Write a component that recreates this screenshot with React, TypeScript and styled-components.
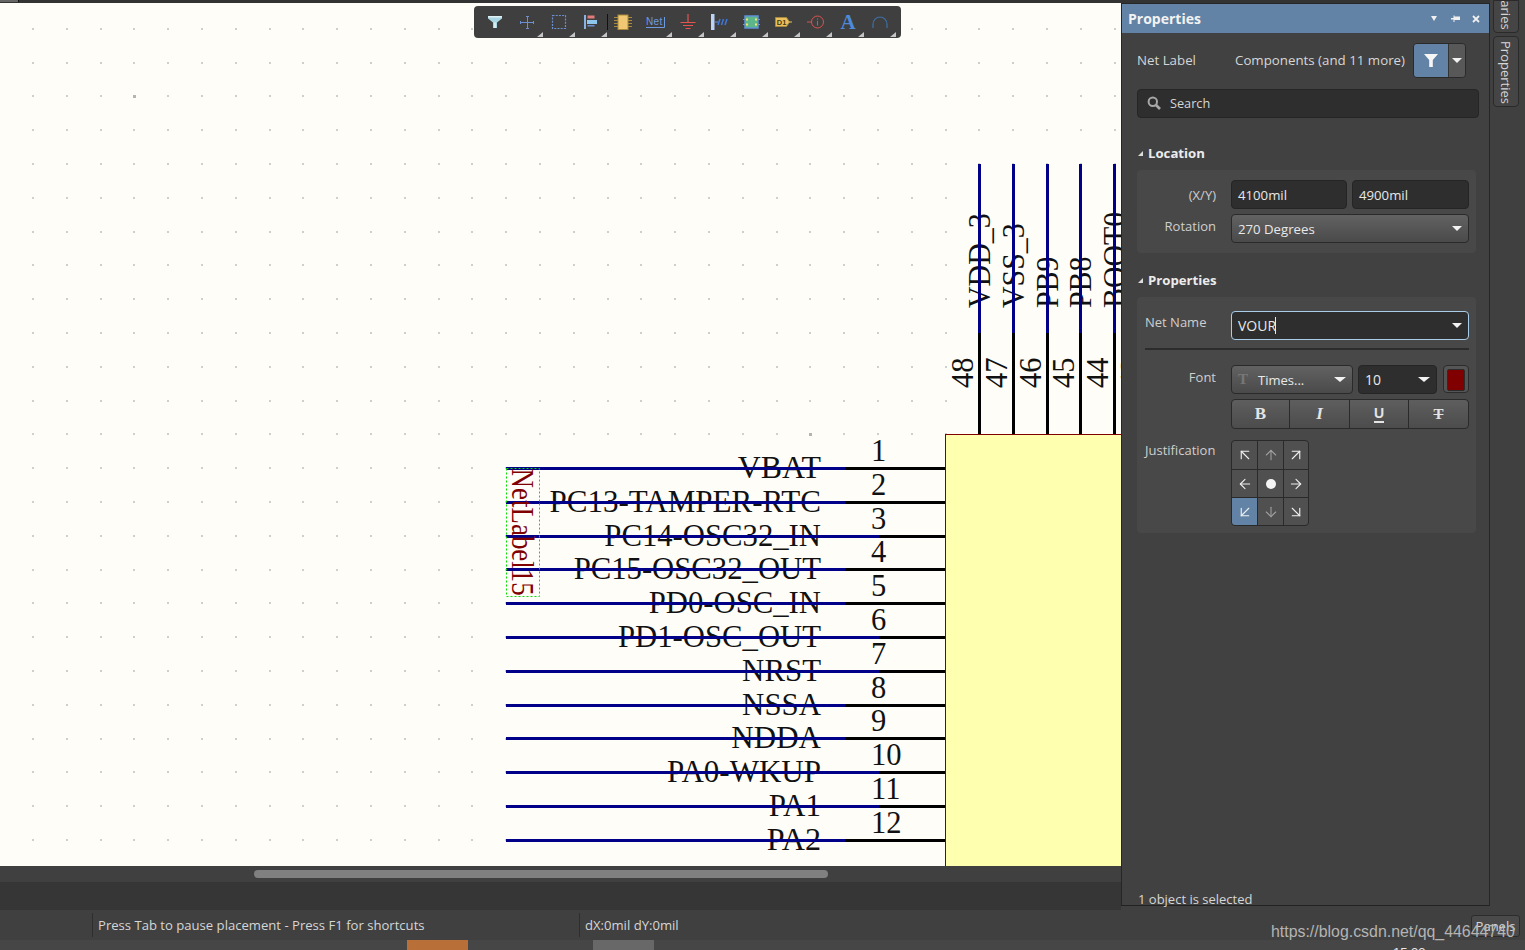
import React from "react";
import styled, { createGlobalStyle } from "styled-components";
import {
  ArrowDown,
  ArrowDownLeft,
  ArrowDownRight,
  ArrowLeft,
  ArrowRight,
  ArrowUp,
  ArrowUpLeft,
  ArrowUpRight,
} from "lucide-react";

const GlobalStyle = createGlobalStyle`
  html, body {
    margin: 0;
    padding: 0;
    background: #404040;
    overflow: hidden;
  }
  * {
    box-sizing: border-box;
  }
`;

const Root = styled.div`
  width: 1525px;
  height: 950px;
  display: flex;
  flex-direction: column;
  font-family: "Open Sans", "Noto Sans", sans-serif;
  font-size: 13px;
  color: #d6d6d6;
  overflow: hidden;
  position: relative;
`;

const Workspace = styled.div`
  height: 910px;
  display: flex;
`;

const LeftColumn = styled.div`
  width: 1121px;
  display: flex;
  flex-direction: column;
`;

const TopStrip = styled.div`
  height: 3px;
  background: #333333;
  &::before {
    content: "";
    display: block;
    width: 18px;
    height: 2px;
    background: #666666;
    border-right: 1px solid #111;
  }
`;

const CanvasArea = styled.div`
  position: relative;
  height: 863px;
  background: #fffdf8;
  overflow: hidden;
`;

const Drawing = styled.svg`
  display: block;
`;

const SchText = styled.text`
  font-family: "Liberation Serif", "Times New Roman", serif;
  font-size: 32.5px;
  fill: #111111;
`;

const NetText = styled(SchText)`
  fill: #800000;
`;

const Toolbar = styled.div`
  position: absolute;
  left: 474px;
  top: 3px;
  width: 427px;
  height: 32px;
  padding-left: 5px;
  display: flex;
  align-items: center;
  background: #3f3f3f;
  border-radius: 4px;
`;

const ToolButton = styled.div<{ $menu?: boolean }>`
  position: relative;
  width: 32.1px;
  height: 32px;
  display: flex;
  align-items: center;
  justify-content: center;
  &::after {
    content: "";
    display: ${(p) => (p.$menu ? "block" : "none")};
    position: absolute;
    right: 0;
    bottom: 1px;
    width: 0;
    height: 0;
    border-left: 6px solid transparent;
    border-bottom: 5px solid #c4c4c4;
  }
`;

const ToolSep = styled.div`
  width: 1px;
  height: 16px;
  margin: 0 -1px 0 0;
  background: #111111;
`;

const HScroll = styled.div`
  height: 16px;
  padding: 4px 0 0 254px;
  background: #404040;
`;

const Thumb = styled.div`
  width: 574px;
  height: 8px;
  border-radius: 4px;
  background: #808080;
`;

const DarkBand = styled.div`
  flex: 1;
  background: #363636;
`;

const PanelWrap = styled.div`
  width: 369px;
  height: 906px;
  padding-top: 3px;
  background: #333333;
`;

const Panel = styled.section`
  height: 100%;
  display: flex;
  flex-direction: column;
  background: #414141;
  border: 1px solid #262626;
  border-bottom-color: #222;
`;

const PanelHeader = styled.header`
  height: 29px;
  flex: none;
  display: flex;
  align-items: center;
  padding: 0 9px 0 6px;
  background: #6283a6;
`;

const PanelTitle = styled.h2`
  margin: 0;
  flex: 1;
  font-size: 14px;
  font-weight: 700;
  color: #f2f2f2;
`;

const HeaderIcons = styled.div`
  display: flex;
  align-items: center;
  gap: 12px;
`;

const HeaderCaret = styled.span`
  width: 0;
  height: 0;
  margin-right: 2px;
  border-left: 3.5px solid transparent;
  border-right: 3.5px solid transparent;
  border-top: 5px solid #f0f0f0;
`;

const PanelBody = styled.div`
  flex: 1;
  display: flex;
  flex-direction: column;
  padding: 10px 10px 0 15px;
`;

const FilterRow = styled.div`
  height: 35px;
  display: flex;
  align-items: center;
  font-size: 13.3px;
`;

const ObjectKind = styled.span`
  width: 98px;
  padding-bottom: 2px;
`;

const ObjectList = styled.span`
  flex: 1;
  padding-bottom: 2px;
  white-space: nowrap;
`;

const FilterButton = styled.div`
  width: 53px;
  height: 35px;
  margin-right: 13px;
  display: flex;
  border: 1px solid #2a2a2a;
  border-radius: 4px;
  overflow: hidden;
`;

const FilterMain = styled.div`
  width: 34px;
  display: flex;
  align-items: center;
  justify-content: center;
  background: #6283a6;
`;

const FilterArrow = styled.div`
  flex: 1;
  display: flex;
  align-items: center;
  justify-content: center;
  background: #585858;
  border-left: 1px solid #333;
`;

const SearchBox = styled.div`
  height: 29px;
  margin-top: 11px;
  padding: 0 0 1px 9px;
  display: flex;
  align-items: center;
  gap: 9px;
  background: #2e2e2e;
  border: 1px solid #252525;
  border-radius: 4px;
  font-size: 12.7px;
`;

const SectionHead = styled.h3<{ $top: number }>`
  height: 18px;
  margin: ${(p) => p.$top}px 0 0;
  display: flex;
  align-items: center;
  gap: 5px;
  font-size: 13.2px;
  font-weight: 700;
  color: #ececec;
`;

const Collapse = styled.span`
  width: 0;
  height: 0;
  margin-left: 1px;
  border-left: 5px solid transparent;
  border-bottom: 5px solid #dcdcdc;
`;

const SectionBox = styled.div<{ $pad: string }>`
  margin: 8px 3px 0 0;
  padding: ${(p) => p.$pad};
  display: flex;
  flex-direction: column;
  background: #484848;
  border-radius: 4px;
`;

const FormRow = styled.div<{ $top?: number }>`
  display: grid;
  grid-template-columns: 71px 238px;
  column-gap: 15px;
  margin-top: ${(p) => p.$top ?? 0}px;
`;

const FieldLabel = styled.label<{ $left?: boolean; $drop?: number }>`
  text-align: ${(p) => (p.$left ? "left" : "right")};
  padding-top: ${(p) => p.$drop ?? 3}px;
  font-size: 13px;
  white-space: nowrap;
  color: #cfcfcf;
`;

const Pair = styled.div`
  display: flex;
  gap: 5px;
`;

const Field = styled.div<{ $w?: number; $focus?: boolean; $large?: boolean }>`
  height: 29px;
  width: ${(p) => (p.$w ? `${p.$w}px` : "100%")};
  padding: 0 6px;
  display: flex;
  align-items: center;
  justify-content: space-between;
  font-size: ${(p) => (p.$large ? "14px" : "13.2px")};
  color: #e8e8e8;
  background: #2e2e2e;
  border: 1px solid ${(p) => (p.$focus ? "#a9cde8" : "#252525")};
  border-radius: 4px;
`;

const Select = styled(Field)`
  background: linear-gradient(#626262, #4a4a4a);
  border-color: #2a2a2a;
`;

const Caret = styled.span`
  width: 0;
  height: 0;
  border-left: 6px solid transparent;
  border-right: 6px solid transparent;
  border-top: 5px solid #f2f2f2;
`;

const SmallCaret = styled(Caret)`
  border-left-width: 5px;
  border-right-width: 5px;
`;

const Caretted = styled.span`
  display: flex;
  align-items: center;
`;

const TimesLabel = styled.span`
  font-size: 13px;
`;

const TextCaret = styled.span`
  width: 1px;
  height: 17px;
  background: #e8e8e8;
  margin-left: -1px;
`;

const Divider = styled.div`
  height: 2px;
  margin: 8px 0 0;
  background: #2c2c2c;
`;

const FontTools = styled.div`
  display: flex;
  gap: 5px;
`;

const FontGlyph = styled.span`
  width: 20px;
  font-family: "Liberation Serif", serif;
  font-weight: 700;
  font-size: 15px;
  color: #777777;
`;

const Swatch = styled.div`
  width: 26px;
  height: 28px;
  margin-left: 1px;
  padding: 3px;
  background: #555555;
  border: 1px solid #2c2c2c;
  border-radius: 4px;
  &::before {
    content: "";
    display: block;
    height: 100%;
    background: #800000;
    border: 1px solid #2c2c2c;
    border-radius: 2px;
  }
`;

const StyleBar = styled.div`
  height: 30px;
  display: grid;
  grid-template-columns: 57px 60px 59px 1fr;
  background: linear-gradient(#5e5e5e, #4c4c4c);
  border: 1px solid #2a2a2a;
  border-radius: 4px;
`;

const StyleCell = styled.div`
  display: flex;
  align-items: center;
  justify-content: center;
  font-family: "Liberation Serif", serif;
  font-weight: 700;
  font-size: 17px;
  color: #e4e4e4;
  & + & {
    border-left: 1px solid #2a2a2a;
  }
`;

const ItalicGlyph = styled.i``;

const UnderGlyph = styled.span`
  font-family: "Liberation Sans", sans-serif;
  font-size: 14px;
  line-height: 15px;
  border-bottom: 2px solid #e4e4e4;
`;

const StrikeGlyph = styled.span`
  font-size: 15px;
  text-decoration: line-through;
`;

const JustifyGrid = styled.div`
  width: 78px;
  height: 86px;
  display: grid;
  grid-template-columns: 25px 25px 1fr;
  grid-template-rows: 28px 27px 1fr;
  background: #2a2a2a;
  gap: 1px;
  border: 1px solid #2a2a2a;
  border-radius: 4px;
  overflow: hidden;
`;

const JustifyCell = styled.div<{ $active?: boolean; $dim?: boolean }>`
  display: flex;
  align-items: center;
  justify-content: center;
  background: ${(p) => (p.$active ? "#6283a6" : "#505050")};
  color: ${(p) => (p.$dim ? "#a0a0a0" : "#f0f0f0")};
`;

const Dot = styled.span`
  width: 10px;
  height: 10px;
  border-radius: 50%;
  background: #f4f4f4;
`;

const PanelFooter = styled.div`
  margin-top: auto;
  margin-bottom: -2px;
  line-height: 16px;
  padding-left: 1px;
  font-size: 13px;
`;

const Dock = styled.aside`
  width: 35px;
  padding: 0 0 0 3px;
  display: flex;
  flex-direction: column;
  gap: 3px;
  background: #404040;
`;

const DockTab = styled.div<{ $h: number; $clipped?: boolean }>`
  width: 26px;
  height: ${(p) => p.$h}px;
  display: flex;
  justify-content: flex-end;
  align-items: center;
  flex-direction: column;
  overflow: hidden;
  background: #454545;
  border: 1px solid #2a2a2a;
  border-radius: ${(p) => (p.$clipped ? "0 0 4px 4px" : "4px")};
`;

const DockLabel = styled.span`
  writing-mode: vertical-rl;
  font-size: 13px;
  line-height: 22px;
  padding-bottom: 2px;
  white-space: nowrap;
`;

const StatusBar = styled.footer`
  height: 30px;
  flex: none;
  display: flex;
  align-items: center;
  background: #404040;
  font-size: 13.1px;
`;

const StatusCell = styled.div<{ $w: number }>`
  width: ${(p) => p.$w}px;
  height: 24px;
  padding-left: 5px;
  display: flex;
  align-items: center;
  border-left: 1px solid #2e2e2e;
  white-space: nowrap;
`;

const StatusLead = styled.div`
  width: 92px;
`;

const PanelsButton = styled.div`
  position: absolute;
  right: 5px;
  top: 915px;
  width: 49px;
  height: 22px;
  display: flex;
  align-items: center;
  justify-content: center;
  background: #4a4a4a;
  border: 1px solid #2c2c2c;
  border-radius: 3px;
  font-size: 13px;
`;

const Watermark = styled.div`
  position: absolute;
  left: 1271px;
  top: 921px;
  font-family: "Liberation Sans", Arial, sans-serif;
  font-size: 15.9px;
  line-height: 21px;
  color: #b4b4b4;
  white-space: nowrap;
`;

const TaskStrip = styled.div`
  position: relative;
  height: 10px;
  flex: none;
  background: #464646;
  overflow: hidden;
`;

const TaskPatch = styled.div<{ $x: number; $c: string }>`
  position: absolute;
  left: ${(p) => p.$x}px;
  top: 0;
  width: 61px;
  height: 10px;
  background: ${(p) => p.$c};
`;

const Clock = styled.div`
  position: absolute;
  left: 1393px;
  top: 5px;
  font-family: "Liberation Sans", sans-serif;
  font-size: 13px;
  line-height: 16px;
  color: #e8e8e8;
`;

const rows = [
  { y: 468.5, name: "VBAT", end: 845, sx: 0.98 },
  { y: 502.5, name: "PC13-TAMPER-RTC", end: 845, sx: 0.955 },
  { y: 536.5, name: "PC14-OSC32_IN", end: 879, sx: 0.945 },
  { y: 569.5, name: "PC15-OSC32_OUT", end: 845, sx: 0.945 },
  { y: 603.5, name: "PD0-OSC_IN", end: 845, sx: 0.945 },
  { y: 637.5, name: "PD1-OSC_OUT", end: 879, sx: 0.945 },
  { y: 671.5, name: "NRST", end: 879, sx: 0.95 },
  { y: 705.5, name: "NSSA", end: 845, sx: 0.95 },
  { y: 738.5, name: "NDDA", end: 845, sx: 0.955 },
  { y: 772.5, name: "PA0-WKUP", end: 879, sx: 0.955 },
  { y: 806.5, name: "PA1", end: 879, sx: 0.955 },
  { y: 840.5, name: "PA2", end: 845, sx: 0.99 },
];

const columns = [
  { x: 979.5, name: "VDD_3", pin: "48" },
  { x: 1013.5, name: "VSS_3", pin: "47" },
  { x: 1047.5, name: "PB9", pin: "46" },
  { x: 1080.5, name: "PB8", pin: "45" },
  { x: 1114.5, name: "BOOT0", pin: "44" },
  { x: 1148.5, name: "", pin: "43" },
];

const BLUE = "#000088";

function GridDots() {
  const dots = [];
  for (let i = 0; i < 33; i++) {
    for (let j = 0; j < 26; j++) {
      const x = Math.floor(32.2 + 33.8 * i + 0.35);
      const y = Math.floor(28 + 33.8 * j + 0.35);
      const major = (i === 3 && j === 2) || (i === 23 && j === 12);
      dots.push(
        major ? (
          <rect key={`${i}-${j}`} x={x} y={y} width={3} height={3} fill="#b4b4b4" />
        ) : (
          <rect key={`${i}-${j}`} x={x} y={y} width={2} height={2} fill="#cfcfcf" />
        )
      );
    }
  }
  return <>{dots}</>;
}

function Schematic() {
  return (
    <Drawing width={1121} height={863} viewBox="0 3 1121 863">
      <GridDots />
      <rect x={945.5} y={434.5} width={200} height={460} fill="#ffffb0" stroke="#800000" strokeWidth={1} />

      {rows.map((r, i) => (
        <g key={r.name}>
          <SchText transform={`translate(821 ${r.y + 9}) scale(${r.sx} 1)`} textAnchor="end">
            {r.name}
          </SchText>
          <SchText transform={`translate(871 ${r.y - 8}) scale(0.94 1)`}>{i + 1}</SchText>
          <line x1={845} x2={945} y1={r.y} y2={r.y} stroke="#000" strokeWidth={3} />
          <line x1={506} x2={r.end} y1={r.y} y2={r.y} stroke={BLUE} strokeWidth={3} />
        </g>
      ))}

      {columns.map((c) => (
        <g key={c.pin}>
          {c.name && (
            <SchText transform={`translate(${c.x + 10.5} 308) rotate(-90) scale(0.92 1)`}>{c.name}</SchText>
          )}
          <SchText transform={`translate(${c.x - 6.5} 388) rotate(-90) scale(0.94 1)`}>{c.pin}</SchText>
          <line x1={c.x} x2={c.x} y1={333} y2={434} stroke="#000" strokeWidth={3} />
          <line x1={c.x} x2={c.x} y1={164} y2={333} stroke={BLUE} strokeWidth={3} />
        </g>
      ))}

      <NetText transform="translate(511.5 468.5) rotate(90) scale(0.83 1)">NetLabel15</NetText>
      <rect x={506.5} y={468.5} width={33} height={128} fill="none" stroke="#00e000" strokeWidth={1} strokeDasharray="2 2" />
    </Drawing>
  );
}

const IconFilter = () => (
  <svg width="16" height="16" viewBox="0 0 16 16">
    <path d="M1 2h14v2.5L10 8.5V14H6V8.5L1 4.5z" fill="#a9d6e2" />
    <path d="M1 2h14v1.5H1z" fill="#dff1f5" />
    <path d="M7 8.5h2V14H7z" fill="#d3ecf2" />
  </svg>
);

const IconCross = () => (
  <svg width="16" height="16" viewBox="0 0 16 16" stroke="#6d8fd0" fill="none">
    <path d="M1 8.5h14M8.5 2v13M7 2.5h3M7 14.5h3M1.5 7v3M14.5 7v3" />
  </svg>
);

const IconDashRect = () => (
  <svg width="16" height="16" viewBox="0 0 16 16" fill="none">
    <rect x="1.5" y="1.5" width="13" height="13" stroke="#6d8fd0" strokeWidth="1.2" strokeDasharray="2 1.2" />
  </svg>
);

const IconAlign = () => (
  <svg width="14" height="16" viewBox="0 0 14 16">
    <rect x="0" y="1" width="2" height="14" fill="#8ab0e6" />
    <rect x="3.5" y="1.5" width="7" height="3" fill="#e37b7b" />
    <rect x="3" y="6" width="10" height="4" fill="#8fc6ee" />
    <rect x="3.5" y="11" width="7" height="1.5" fill="#6d8fd0" />
  </svg>
);

const IconChip = () => (
  <svg width="18" height="16" viewBox="0 0 18 16">
    <path d="M0 3.5h4M0 6.5h4M0 9.5h4M0 12.5h4M14 3.5h4M14 6.5h4M14 9.5h4M14 12.5h4" stroke="#a98a3c" />
    <rect x="4" y="1" width="10" height="14.5" fill="#f0c874" stroke="#a98a3c" />
  </svg>
);

const IconNet = () => (
  <svg width="20" height="16" viewBox="0 0 20 16">
    <text x="0" y="11" fontFamily="Liberation Sans, sans-serif" fontSize="10" letterSpacing="0.3" fill="#6d9be0">
      Net
    </text>
    <path d="M0 13.5h18.5V3" stroke="#6d9be0" fill="none" />
  </svg>
);

const IconGround = () => (
  <svg width="16" height="16" viewBox="0 0 16 16" stroke="#e5544f" fill="none">
    <path d="M8 0v8M.5 8.5h15M3 11.5h10M5.5 14.5h5" strokeWidth="1.2" />
  </svg>
);

const IconPort = () => (
  <svg width="18" height="16" viewBox="0 0 18 16">
    <rect x="0" y="0" width="3.5" height="16" fill="#bcd3f5" />
    <path d="M3.5 8h4" stroke="#6d8fd0" />
    <path d="M7 11l2-6M10.5 11l2-6M14 11l2-6" stroke="#3f78d8" strokeWidth="1.5" fill="none" />
  </svg>
);

const IconPart = () => (
  <svg width="17" height="14" viewBox="0 0 17 14">
    <path d="M0 4.5h2M0 9.5h2M15 4.5h2M15 9.5h2" stroke="#6d9be0" />
    <rect x="2" y="1" width="13" height="12" fill="#5fb58a" stroke="#5f93d8" strokeWidth="1.5" />
    <rect x="3" y="3.5" width="2" height="2" fill="#f2e36a" />
    <rect x="3" y="8.5" width="2" height="2" fill="#f2e36a" />
    <rect x="12" y="3.5" width="2" height="2" fill="#f2e36a" />
    <rect x="12" y="8.5" width="2" height="2" fill="#f2e36a" />
  </svg>
);

const IconTag = () => (
  <svg width="17" height="10" viewBox="0 0 17 10">
    <path d="M.5.5h11l3 4.5-3 4.5H.5z" fill="#eac25f" stroke="#a98a3c" />
    <path d="M14 5h3" stroke="#eac25f" />
    <text x="1.8" y="8" fontFamily="Liberation Sans, sans-serif" fontWeight="700" fontSize="7.5" fill="#4a3a10">
      D1
    </text>
  </svg>
);

const IconInfo = () => (
  <svg width="18" height="14" viewBox="0 0 18 14" fill="none" stroke="#d9534f">
    <circle cx="10.5" cy="7" r="6" />
    <path d="M0 7h4.5M10.5 6v4.5" />
    <path d="M10.5 3.5v1.2" />
  </svg>
);

const IconLetterA = () => (
  <svg width="16" height="18" viewBox="0 0 16 18">
    <text x="8" y="16" textAnchor="middle" fontFamily="Liberation Serif, serif" fontWeight="700" fontSize="21" fill="#4d8ad8">
      A
    </text>
  </svg>
);

const IconArc = () => (
  <svg width="16" height="12" viewBox="0 0 16 12" fill="none">
    <path d="M1 12V8a7 7 0 0 1 14 0v4" stroke="#3f6ea8" strokeWidth="1.2" />
  </svg>
);

const IconPin = () => (
  <svg width="9" height="8" viewBox="0 0 9 8" fill="#f0f0f0">
    <path d="M0 3h2.5V0.5h1V1.5H9V5H3.5V7h-1V4.5H0z" />
  </svg>
);

const IconClose = () => (
  <svg width="8" height="8" viewBox="0 0 8 8" stroke="#f0f0f0" strokeWidth="1.8">
    <path d="M1 1l6 6M7 1l-6 6" />
  </svg>
);

const IconFunnelWhite = () => (
  <svg width="16" height="15" viewBox="0 0 16 15" fill="#f6f6f6">
    <path d="M1 1h14L9.8 7v7H6.2V7z" />
  </svg>
);

const IconLens = () => (
  <svg width="14" height="14" viewBox="0 0 14 14" fill="none" stroke="#a8a8a8">
    <circle cx="5.8" cy="5.8" r="4.2" strokeWidth="2" />
    <path d="M9 9l4 4" strokeWidth="2.6" />
  </svg>
);

const tools: { icon: React.ReactNode; menu: boolean }[] = [
  { icon: <IconFilter />, menu: false },
  { icon: <IconCross />, menu: true },
  { icon: <IconDashRect />, menu: true },
  { icon: <IconAlign />, menu: true },
];

const placeTools: { icon: React.ReactNode; menu: boolean }[] = [
  { icon: <IconChip />, menu: false },
  { icon: <IconNet />, menu: true },
  { icon: <IconGround />, menu: true },
  { icon: <IconPort />, menu: true },
  { icon: <IconPart />, menu: true },
  { icon: <IconTag />, menu: true },
  { icon: <IconInfo />, menu: true },
  { icon: <IconLetterA />, menu: true },
  { icon: <IconArc />, menu: true },
];

export default function App() {
  return (
    <Root>
      <GlobalStyle />
      <Workspace>
        <LeftColumn>
          <TopStrip />
          <CanvasArea>
            <Schematic />
            <Toolbar>
              {tools.map((t, i) => (
                <ToolButton key={i} $menu={t.menu}>
                  {t.icon}
                </ToolButton>
              ))}
              <ToolSep />
              {placeTools.map((t, i) => (
                <ToolButton key={i} $menu={t.menu}>
                  {t.icon}
                </ToolButton>
              ))}
            </Toolbar>
          </CanvasArea>
          <HScroll>
            <Thumb />
          </HScroll>
          <DarkBand />
        </LeftColumn>

        <PanelWrap>
          <Panel>
            <PanelHeader>
              <PanelTitle>Properties</PanelTitle>
              <HeaderIcons>
                <HeaderCaret />
                <IconPin />
                <IconClose />
              </HeaderIcons>
            </PanelHeader>
            <PanelBody>
              <FilterRow>
                <ObjectKind>Net Label</ObjectKind>
                <ObjectList>Components (and 11 more)</ObjectList>
                <FilterButton>
                  <FilterMain>
                    <IconFunnelWhite />
                  </FilterMain>
                  <FilterArrow>
                    <SmallCaret />
                  </FilterArrow>
                </FilterButton>
              </FilterRow>
              <SearchBox>
                <IconLens />
                Search
              </SearchBox>

              <SectionHead $top={26}>
                <Collapse />
                Location
              </SectionHead>
              <SectionBox $pad="10px 7px 10px 8px">
                <FormRow>
                  <FieldLabel $drop={6}>(X/Y)</FieldLabel>
                  <Pair>
                    <Field $w={116}>4100mil</Field>
                    <Field $w={117}>4900mil</Field>
                  </Pair>
                </FormRow>
                <FormRow $top={5}>
                  <FieldLabel>Rotation</FieldLabel>
                  <Select>
                    270 Degrees
                    <SmallCaret />
                  </Select>
                </FormRow>
              </SectionBox>

              <SectionHead $top={18}>
                <Collapse />
                Properties
              </SectionHead>
              <SectionBox $pad="14px 7px 7px 8px">
                <FormRow>
                  <FieldLabel $left $drop={2}>
                    Net Name
                  </FieldLabel>
                  <Field $focus $large>
                    <Caretted>
                      VOUR
                      <TextCaret />
                    </Caretted>
                    <SmallCaret />
                  </Field>
                </FormRow>
                <Divider />
                <FormRow $top={15}>
                  <FieldLabel>Font</FieldLabel>
                  <FontTools>
                    <Select $w={122}>
                      <Caretted>
                        <FontGlyph>T</FontGlyph>
                        <TimesLabel>Times...</TimesLabel>
                      </Caretted>
                      <Caret />
                    </Select>
                    <Field $w={79} $large>
                      10
                      <Caret />
                    </Field>
                    <Swatch />
                  </FontTools>
                </FormRow>
                <FormRow $top={5}>
                  <span />
                  <StyleBar>
                    <StyleCell>B</StyleCell>
                    <StyleCell>
                      <ItalicGlyph>I</ItalicGlyph>
                    </StyleCell>
                    <StyleCell>
                      <UnderGlyph>U</UnderGlyph>
                    </StyleCell>
                    <StyleCell>
                      <StrikeGlyph>T</StrikeGlyph>
                    </StyleCell>
                  </StyleBar>
                </FormRow>
                <FormRow $top={11}>
                  <FieldLabel $left $drop={1}>
                    Justification
                  </FieldLabel>
                  <JustifyGrid>
                    <JustifyCell>
                      <ArrowUpLeft size={18} strokeWidth={1.5} />
                    </JustifyCell>
                    <JustifyCell $dim>
                      <ArrowUp size={16} strokeWidth={1.6} />
                    </JustifyCell>
                    <JustifyCell>
                      <ArrowUpRight size={18} strokeWidth={1.5} />
                    </JustifyCell>
                    <JustifyCell>
                      <ArrowLeft size={16} strokeWidth={1.6} />
                    </JustifyCell>
                    <JustifyCell>
                      <Dot />
                    </JustifyCell>
                    <JustifyCell>
                      <ArrowRight size={16} strokeWidth={1.6} />
                    </JustifyCell>
                    <JustifyCell $active>
                      <ArrowDownLeft size={18} strokeWidth={1.5} />
                    </JustifyCell>
                    <JustifyCell $dim>
                      <ArrowDown size={16} strokeWidth={1.6} />
                    </JustifyCell>
                    <JustifyCell>
                      <ArrowDownRight size={18} strokeWidth={1.5} />
                    </JustifyCell>
                  </JustifyGrid>
                </FormRow>
              </SectionBox>

              <PanelFooter>1 object is selected</PanelFooter>
            </PanelBody>
          </Panel>
        </PanelWrap>

        <Dock>
          <DockTab $h={33} $clipped>
            <DockLabel>Libraries</DockLabel>
          </DockTab>
          <DockTab $h={71}>
            <DockLabel>Properties</DockLabel>
          </DockTab>
        </Dock>
      </Workspace>

      <StatusBar>
        <StatusLead />
        <StatusCell $w={487}>Press Tab to pause placement - Press F1 for shortcuts</StatusCell>
        <StatusCell $w={200}>dX:0mil dY:0mil</StatusCell>
      </StatusBar>
      <TaskStrip>
        <TaskPatch $x={407} $c="#b87038" />
        <TaskPatch $x={593} $c="#686868" />
        <Clock>15:33</Clock>
      </TaskStrip>
      <PanelsButton>Panels</PanelsButton>
      <Watermark>https://blog.csdn.net/qq_44644740</Watermark>
    </Root>
  );
}
